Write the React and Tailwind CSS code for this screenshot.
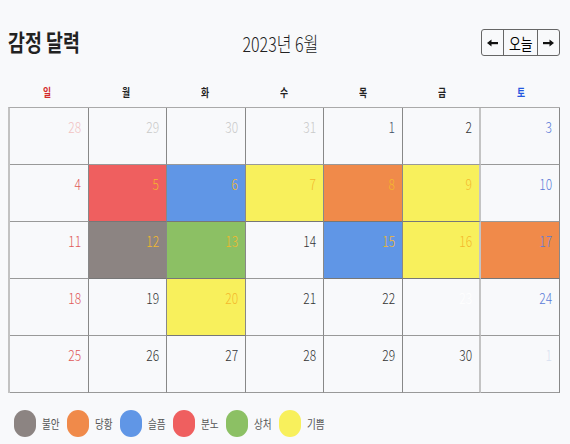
import { useState } from 'react'

const EMOTIONS = [
  { key: 'anxious', label: '불안', color: 'bg-[#8c8482]' },
  { key: 'embarrassed', label: '당황', color: 'bg-[#f08a4a]' },
  { key: 'sad', label: '슬픔', color: 'bg-[#6096e6]' },
  { key: 'angry', label: '분노', color: 'bg-[#ef5f5f]' },
  { key: 'hurt', label: '상처', color: 'bg-[#8cc064]' },
  { key: 'happy', label: '기쁨', color: 'bg-[#f8f05c]' },
]

const colorOf = (key) => EMOTIONS.find(e => e.key === key)?.color || ''

// 6월 감정 기록
const records = {
  5: 'angry',
  6: 'sad',
  7: 'happy',
  8: 'embarrassed',
  9: 'happy',
  12: 'anxious',
  13: 'hurt',
  15: 'sad',
  16: 'happy',
  17: 'embarrassed',
  20: 'happy',
}

const WEEKDAYS = ['일', '월', '화', '수', '목', '금', '토']

// 2023년 6월: 5/28 ~ 7/1
const buildDays = () => {
  const days = []
  ;[28, 29, 30, 31].forEach(d => days.push({ day: d, month: 'prev' }))
  for (let d = 1; d <= 30; d++) days.push({ day: d, month: 'cur' })
  days.push({ day: 1, month: 'next' })
  return days
}

const numberColor = (item, idx) => {
  const col = idx % 7
  if (item.month === 'prev') return col === 0 ? 'text-[#f2c2c2]' : 'text-[#c9c9c9]'
  if (item.month === 'next') return 'text-[#d9e1f1]'
  if (item.day === 23) return 'text-white'
  if (col === 6) return 'text-[#5b7bd8]'
  if (records[item.day]) return 'text-[#f4b82c]'
  if (col === 0) return 'text-[#e05858]'
  if (item.day === 1) return 'text-[#3d4f66]'
  return 'text-[#333]'
}

const Arrow = ({ dir }) => (
  <svg width="11" height="8" viewBox="0 0 11 8">
    <g transform={dir === 'right' ? 'translate(11,0) scale(-1,1)' : undefined}>
      <path d="M0 4 L4.5 0.5 L4.5 7.5 Z" fill="#111" />
      <rect x="3.5" y="3" width="7.5" height="2.2" fill="#111" />
    </g>
  </svg>
)

export default function App() {
  const [month] = useState({ year: 2023, month: 6 })
  const days = buildDays()

  return (
    <div
      className="w-[570px] h-[444px] bg-[#f8f9fb] pl-2 pr-[10px] pt-[29px] overflow-hidden"
      style={{ fontFamily: '"Noto Sans CJK KR", "Noto Sans", sans-serif' }}
    >
      {/* 상단 헤더 */}
      <div className="flex justify-between items-center h-[27px]">
        <div className="w-[72px] whitespace-nowrap">
          <h1 className="inline-block scale-x-80 origin-left text-[23px] font-bold text-[#222] leading-none">
            감정 달력
          </h1>
        </div>
        <div className="w-[76px] flex justify-center whitespace-nowrap pt-[3px]">
          <span className="inline-block scale-x-80 text-[20px] font-light text-[#222] leading-none">
            {month.year}년 {month.month}월
          </span>
        </div>
        <div className="flex h-[27px] border border-[#666] rounded-[3px] overflow-hidden">
          <button className="w-[22px] flex items-center justify-center border-r border-[#666]">
            <Arrow dir="left" />
          </button>
          <button className="w-[34px] flex items-center justify-center border-r border-[#666] text-[16px] leading-none text-black">
            <span className="inline-block scale-x-80">오늘</span>
          </button>
          <button className="w-[21px] flex items-center justify-center">
            <Arrow dir="right" />
          </button>
        </div>
      </div>

      {/* 요일 */}
      <div className="grid grid-cols-7 mt-[26px] h-[20px] items-center">
        {WEEKDAYS.map((w, i) => (
          <div
            key={w}
            className={`text-center text-[11px] font-bold ${i === 0 ? 'text-[#d42a2a]' : i === 6 ? 'text-[#2457e0]' : 'text-[#222]'}`}
          >
            <span className="inline-block scale-x-80">{w}</span>
          </div>
        ))}
      </div>

      {/* 달력 */}
      <div className="grid grid-cols-7 mt-[5px] border-t border-l-2 border-t-[#aaa] border-l-[#c2c2c2]">
        {days.map((item, idx) => {
          const col = idx % 7
          const emo = item.month === 'cur' ? records[item.day] : null
          return (
            <div
              key={idx}
              className={`h-[57px] border-b flex justify-end pr-[7px] pt-[9px] ${
                col === 5 ? 'border-r-2 border-r-[#c4c4c4]' : 'border-r border-r-[#888]'
              } ${emo ? 'border-b-[#777]' : 'border-b-[#999]'} ${emo ? colorOf(emo) : ''}`}
            >
              <span className={`inline-block scale-x-80 origin-right text-[15px] font-light leading-[20px] ${numberColor(item, idx)}`}>
                {item.day}
              </span>
            </div>
          )
        })}
      </div>

      {/* 범례 */}
      <div className="flex items-center mt-[17px] pl-[6px]">
        {EMOTIONS.map(e => (
          <div key={e.key} className="flex items-center mr-[5px]">
            <div className={`w-[22px] h-[27px] rounded-full ${e.color}`} />
            <span className="inline-block scale-x-80 origin-left ml-[6px] w-[20px] text-[12px] text-[#555] whitespace-nowrap">
              {e.label}
            </span>
          </div>
        ))}
      </div>
    </div>
  )
}
